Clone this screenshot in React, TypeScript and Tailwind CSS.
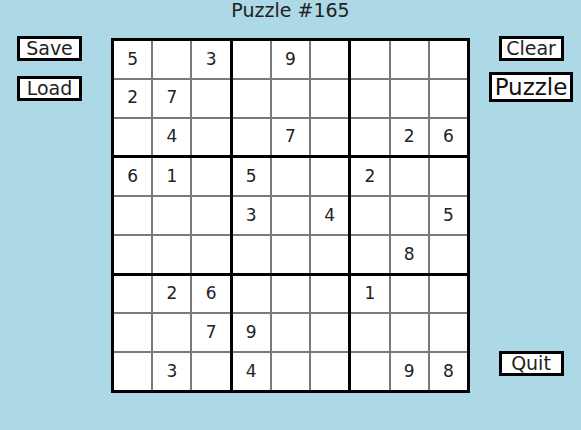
const rows: string[] = [
  '5.3.9....',
  '27.......',
  '.4..7..26',
  '61.5..2..',
  '...3.4..5',
  '.......8.',
  '.26...1..',
  '..79.....',
  '.3.4...98',
];

function Btn({ label, big }: { label: string; big?: boolean }) {
  return (
    <button
      className={
        big
          ? 'w-[84px] h-[30px] border-[3px] border-black bg-white text-[23px] leading-none text-[#111] flex items-center justify-center'
          : 'w-[65px] h-[25px] border-[3px] border-black bg-white text-[19px] leading-none text-[#222] flex items-center justify-center'
      }
    >
      {label}
    </button>
  );
}

function Box({ br, bc }: { br: number; bc: number }) {
  const cells = [];
  for (let r = 0; r < 3; r++) {
    for (let c = 0; c < 3; c++) {
      const ch = rows[br * 3 + r][bc * 3 + c];
      cells.push(
        <div key={`${r}-${c}`} className="bg-white flex items-center justify-center text-[17px] text-[#222]">
          {ch === '.' ? '' : ch}
        </div>
      );
    }
  }
  return <div className="grid grid-cols-3 grid-rows-3 gap-[2px] bg-[#7a7a7a]">{cells}</div>;
}

export default function App() {
  const boxes = [];
  for (let br = 0; br < 3; br++) {
    for (let bc = 0; bc < 3; bc++) {
      boxes.push(<Box key={`${br}${bc}`} br={br} bc={bc} />);
    }
  }

  return (
    <div
      className="w-[581px] h-[430px] bg-[#add8e6] flex overflow-hidden"
      style={{ fontFamily: '"DejaVu Sans", sans-serif' }}
    >
      <div className="w-[111px] shrink-0 pt-[36px] pl-[17px] flex flex-col gap-[15px]">
        <Btn label="Save" />
        <Btn label="Load" />
      </div>

      <div className="w-[359px] shrink-0 flex flex-col">
        <div className="h-[38px] flex justify-center text-[19px] leading-[20px] text-[#222]">
          Puzzle #165
        </div>
        <div className="w-[359px] h-[355px] border-[3px] border-black bg-black grid grid-cols-3 grid-rows-3 gap-[3px]">
          {boxes}
        </div>
      </div>

      <div className="w-[122px] shrink-0 pt-[36px] pb-[54px] flex flex-col items-center">
        <Btn label="Clear" />
        <div className="mt-[11px]">
          <Btn label="Puzzle" big />
        </div>
        <div className="mt-auto">
          <Btn label="Quit" />
        </div>
      </div>
    </div>
  );
}
